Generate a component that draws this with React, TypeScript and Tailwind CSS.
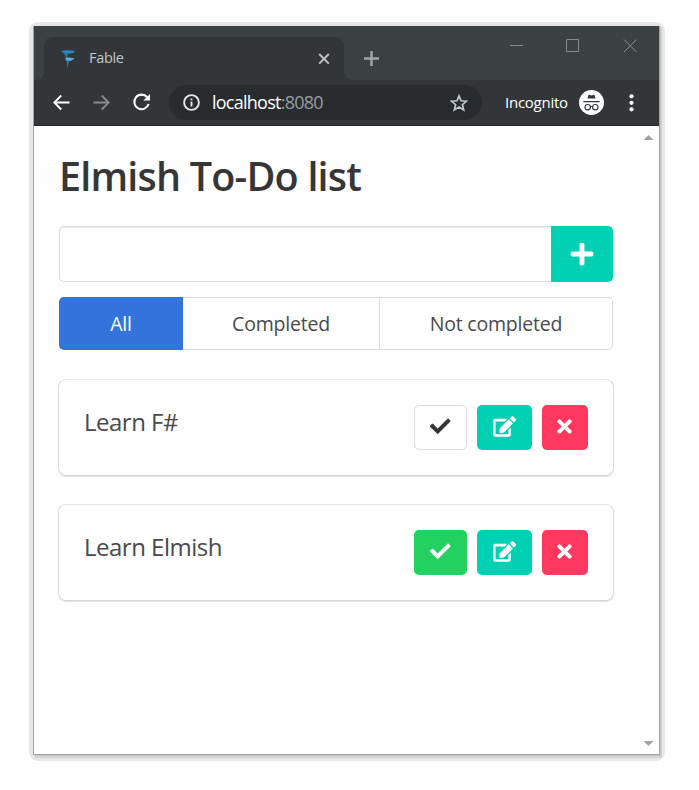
import React from "react";
import { FaCheck, FaEdit, FaPlus, FaTimes } from "react-icons/fa";

function FableLogo() {
  return (
    <svg className="h-[18px] w-4" viewBox="0 0 16 18">
      <path d="M.5 1.4C4 0 9 -.2 14.5 .8L14.6 2.4 10.5 3.4 7.6 4C6 3.4 3 2.4 .5 1.4Z" fill="#2d86bd" />
      <path d="M3 3 9 3 7.6 5.4 8.2 8.2 5.8 8.2 5 5.4Z" fill="#24709f" />
      <path d="M5.4 7.8 9.6 7.4 14.8 8.4 11.6 10.4 8.6 11.2 5.8 10.4Z" fill="#62a9d8" />
      <path d="M6.6 10.2 9.4 10.6 7.4 17.6Z" fill="#2a7fb5" />
    </svg>
  );
}

function IncognitoBadge() {
  return (
    <svg className="size-[25px]" viewBox="0 0 25 25">
      <circle cx="12.5" cy="12.5" r="12.5" fill="#fff" />
      <path d="M8.4 8.6 9.7 4.6 12.5 5.5 15.3 4.6 16.6 8.6ZM4.4 10.9H20.6V12.3H4.4Z" fill="#323639" />
      <g fill="none" stroke="#323639" strokeWidth="1.1">
        <circle cx="8.7" cy="17.2" r="2.7" />
        <circle cx="16.3" cy="17.2" r="2.7" />
        <path d="M11.3 16.7Q12.5 15.9 13.7 16.7" />
      </g>
    </svg>
  );
}

function TabStrip() {
  return (
    <div className="flex h-[54px] bg-[#3c4143]">
      <div className="flex w-[10px] flex-col justify-end bg-[#323639]">
        <div className="h-full rounded-br-[8px] bg-[#3c4143]" />
      </div>
      <div className="flex bg-[linear-gradient(#3c4143_50%,#323639_50%)] pt-[11px]">
        <div className="flex w-[300px] items-center rounded-t-[9px] bg-[#323639] pr-[14px] pl-4">
          <FableLogo />
          <span className="ml-[13px] text-[14.5px] leading-none tracking-[-0.3px] text-[#c3c6c8]">Fable</span>
          <svg className="ml-auto size-3" viewBox="0 0 12 12" fill="none" stroke="#c0c3c5" strokeWidth="1.9">
            <path d="M1.2 1 10.8 10.6M10.8 1 1.2 10.6" />
          </svg>
        </div>
      </div>
      <div className="flex flex-1 bg-[#323639]">
        <div className="flex flex-1 rounded-bl-[9px] bg-[#3c4143]">
          <svg className="mt-[25px] ml-[20px] size-[15px]" viewBox="0 0 15 15" fill="none" stroke="#a2a4a6" strokeWidth="2.5">
            <path d="M0 7.5H15M7.5 0V15" />
          </svg>
          <svg className="mt-[13px] mr-[22px] ml-auto h-[14px] w-[128px]" viewBox="0 0 128 14" fill="none" stroke="#858a8c" strokeWidth="1">
            <path d="M1 6.5H14M57.5 .5H69.5V12.5H57.5ZM115 .5 127.5 13M127.5 .5 115 13" />
          </svg>
        </div>
      </div>
    </div>
  );
}

function Toolbar() {
  return (
    <div className="flex h-[46px] items-center border-b border-[#25292b] bg-[#323639]">
      <svg className="ml-[19px] h-4 w-[17px]" viewBox="0 0 17 16" fill="none" stroke="#fff" strokeWidth="2">
        <path d="M16.5 7.5H1.8M8.2 .5 1.3 7.5 8.2 14.5" />
      </svg>
      <svg className="ml-[23px] h-4 w-[17px]" viewBox="0 0 17 16" fill="none" stroke="#85898b" strokeWidth="2">
        <path d="M.5 7.5H15.2M8.8 .5 15.7 7.5 8.8 14.5" />
      </svg>
      <svg className="ml-[22px] size-[19px]" viewBox="0 0 19 19" fill="none" stroke="#fff" strokeWidth="2.1">
        <path d="M15.2 4.2A7.3 7.3 0 1 0 16.6 11" />
        <path d="M18 1V7.6H11.4Z" fill="#fff" stroke="none" />
      </svg>
      <div className="ml-[18px] flex h-[35px] w-[313px] items-center rounded-full bg-[#282c2f] pr-[14px] pl-[14px]">
        <svg className="size-[17px]" viewBox="0 0 17 17" fill="none" stroke="#e3e5e6" strokeWidth="1.9">
          <circle cx="8.5" cy="8.5" r="7.4" />
          <path d="M8.5 7.6V12.6M8.5 4.4V6.2" />
        </svg>
        <span className="-mt-px ml-[12px] text-[18px] leading-none tracking-[-0.75px] text-white">
          localhost<span className="text-[#969da3]">:8080</span>
        </span>
        <svg className="ml-auto size-[18px]" viewBox="0 0 18 18" fill="none" stroke="#bfc5cb" strokeWidth="1.7">
          <path d="M9 1.8 11.1 6.8 16.5 7.2 12.4 10.7 13.7 16 9 13.1 4.3 16 5.6 10.7 1.5 7.2 6.9 6.8Z" />
        </svg>
      </div>
      <span className="-mt-px ml-[23px] w-[64px] text-[15px] leading-none tracking-[-0.25px] whitespace-nowrap text-white">Incognito</span>
      <div className="ml-[10px]">
        <IncognitoBadge />
      </div>
      <svg className="ml-[25px] h-[18px] w-[5px]" viewBox="0 0 5 18" fill="#fff">
        <circle cx="2.5" cy="2.3" r="2.1" />
        <circle cx="2.5" cy="8.8" r="2.1" />
        <circle cx="2.5" cy="15.3" r="2.1" />
      </svg>
    </div>
  );
}

function TodoItem({ title, done }: { title: string; done: boolean }) {
  return (
    <div className="flex h-[97px] items-start rounded-[8px] border border-t-[#e6e6e6] border-r-[#d8d8d8] border-b-[#d6d6d6] border-l-[#dcdcdc] p-[25px] shadow-[0_1px_0_0_#e2e2e2]">
      <span className="mt-[2px] text-[24px] leading-[30px] tracking-[-0.5px] text-[#4a4a4a]">{title}</span>
      <div className="ml-auto flex gap-[10px]">
        <button
          className={
            done
              ? "flex h-[45px] w-[53px] items-center justify-center rounded-[5px] bg-[#23d160] pb-[2px] text-white"
              : "flex h-[45px] w-[53px] items-center justify-center rounded-[5px] border border-[#dbdbdb] bg-[#fefefe] pb-[2px] text-[#363636]"
          }
        >
          <FaCheck size={20.5} />
        </button>
        <button className="flex h-[45px] w-[55px] items-center justify-center rounded-[5px] bg-[#00d1b2] pb-[2px] text-white">
          <FaEdit size={23} />
        </button>
        <button className="flex h-[45px] w-[46px] items-center justify-center rounded-[5px] bg-[#ff3860] pr-px pb-[2px] text-white">
          <FaTimes size={21} />
        </button>
      </div>
    </div>
  );
}

const todos = [
  { title: "Learn F#", done: false },
  { title: "Learn Elmish", done: true },
];

export default function App() {
  return (
    <div className="h-[790px] w-[699px] bg-[#fefefe] pt-[22px] pl-[29px] font-['Open_Sans','Noto_Sans',sans-serif]">
      <div className="h-[739px] w-[636px] rounded-[9px] bg-[#e7e7e7] pt-1 pl-1">
        <div className="flex h-[729px] w-[627px] flex-col border-x border-b border-[#a3a3a3] bg-[#fefefe] shadow-[1px_1px_0_0_#c6c6c6,2px_3px_0_0_#d3d3d3]">
          <TabStrip />
          <Toolbar />
          <div className="flex flex-1">
            <main className="w-[580px] pl-6">
              <h1 className="mt-[24px] ml-px text-[39.5px] leading-[52px] font-semibold tracking-[-0.8px] whitespace-nowrap text-[#363636]">
                Elmish To-Do list
              </h1>
              <div className="mt-6 ml-px flex h-14 w-[554px]">
                <input className="w-[492px] rounded-l-[5px] border border-r-0 border-[#dbdbdb] bg-[#fefefe] shadow-[inset_0_1px_1px_#e9e9e9] outline-none" />
                <button className="flex w-[62px] items-center justify-center rounded-r-[5px] bg-[#00d1b2] text-white">
                  <FaPlus size={26} />
                </button>
              </div>
              <div className="mt-[15px] ml-px flex h-[53px] w-[554px] text-[19.5px] tracking-[-0.2px] text-[#4a4a4a]">
                <div className="flex w-[124px] items-center justify-center rounded-l-[5px] bg-[#3273dc] text-white">All</div>
                <div className="flex w-[197px] items-center justify-center border-y border-r border-[#dbdbdb]">Completed</div>
                <div className="flex w-[233px] items-center justify-center rounded-r-[5px] border-y border-r border-[#dbdbdb]">Not completed</div>
              </div>
              <div className="mt-[29px] flex w-[556px] flex-col gap-7">
                {todos.map((todo) => (
                  <TodoItem key={todo.title} title={todo.title} done={todo.done} />
                ))}
              </div>
            </main>
            <div className="mr-[5px] ml-auto flex w-[11px] flex-col justify-between pt-[9px] pb-[8px]">
              <svg className="h-[5px] w-[11px]" viewBox="0 0 11 5" fill="#a3a3a3">
                <path d="M.5 5 5.5 0 10.5 5Z" />
              </svg>
              <svg className="h-[5px] w-[11px]" viewBox="0 0 11 5" fill="#a3a3a3">
                <path d="M.5 0 5.5 5 10.5 0Z" />
              </svg>
            </div>
          </div>
        </div>
      </div>
    </div>
  );
}
